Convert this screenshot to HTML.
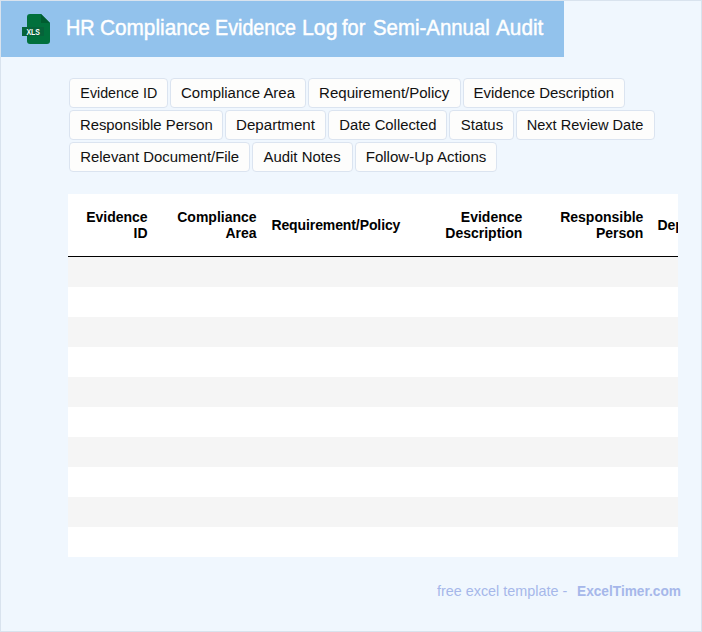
<!DOCTYPE html>
<html lang="en"><head><meta charset="utf-8"><title>HR Compliance Evidence Log for Semi-Annual Audit</title>
<style>
html,body{margin:0;padding:0;}
body{width:702px;height:632px;overflow:hidden;background:#f0f7fe;font-family:"Liberation Sans",Arial,sans-serif;position:relative;}
.frame{position:absolute;left:0;top:0;width:700px;height:630px;border:1px solid #d9e3ee;pointer-events:none;}
.hdr{position:absolute;left:1px;top:1px;width:563px;height:56px;background:#92c2ec;}
.hdr h1 span{position:absolute;top:0;left:0;display:block;transform-origin:0 50%;}
.hdr h1{position:absolute;margin:0;left:0;top:14.6px;font-size:21.8px;line-height:24px;font-weight:400;color:#fff;-webkit-text-stroke:0.45px #fff;white-space:nowrap;transform-origin:0 50%;transform:scaleX(1);}
.ico{position:absolute;left:21px;top:13px;width:30px;height:32px;}
.tag{position:absolute;box-sizing:border-box;height:30px;border:1px solid #dbe4f0;border-radius:4px;background:#fdfdfc;color:#111;font-size:15.5px;line-height:28px;text-align:center;white-space:nowrap;}
.tag span{display:inline-block;transform-origin:50% 50%;}
.tbl{position:absolute;left:68px;top:194px;width:610px;height:363px;background:#fff;overflow:hidden;}
.th{position:absolute;font-weight:700;font-size:14px;line-height:16px;color:#000;text-align:right;white-space:nowrap;}
.rule{position:absolute;left:0;top:62px;width:610px;height:1px;background:#000;}
.row{position:absolute;left:0;width:610px;height:30px;background:#f5f5f5;}
.foot{position:absolute;top:582px;transform-origin:0 50%;font-size:14.5px;line-height:18px;color:#a6b7ea;white-space:nowrap;}
</style></head><body>
<div class="hdr">
<svg class="ico" viewBox="0 0 30 32">
<path d="M8 0 H19 L28 9 V27 a3 3 0 0 1 -3 3 H8 a3 3 0 0 1 -3 -3 V3 a3 3 0 0 1 3 -3 Z" fill="#01703c"/>
<path d="M19 0 L28 9 H19 Z" fill="#005c30"/>
<rect x="0" y="13" width="22" height="9" fill="#06633a"/>
<text transform="translate(11.2 20.8) scale(0.8 1)" x="0" y="0" text-anchor="middle" font-family="Liberation Sans, Arial, sans-serif" font-weight="700" font-size="8.7" fill="#ffffff">XLS</text>
</svg>
<h1><span style="left:64.7px;transform:scaleX(0.9088)">HR</span> <span style="left:98.6px;transform:scaleX(0.9531)">Compliance</span> <span style="left:214.1px;transform:scaleX(0.9041)">Evidence</span> <span style="left:300.9px;transform:scaleX(0.9751)">Log</span> <span style="left:341.4px;transform:scaleX(0.9151)">for</span> <span style="left:371.7px;transform:scaleX(0.9361)">Semi-Annual</span> <span style="left:494.85px;transform:scaleX(0.952)">Audit</span></h1>
</div>

<div class="tag" id="tag0" style="left:69px;top:78px;width:99px"><span style="transform:translateY(-0.4px) scaleX(0.9193)">Evidence ID</span></div>
<div class="tag" id="tag1" style="left:170px;top:78px;width:136px"><span style="transform:translateY(-0.4px) scaleX(0.9654)">Compliance Area</span></div>
<div class="tag" id="tag2" style="left:308px;top:78px;width:153px"><span style="transform:translateY(-0.4px) scaleX(0.9685)">Requirement/Policy</span></div>
<div class="tag" id="tag3" style="left:463px;top:78px;width:162px"><span style="transform:translateY(-0.4px) scaleX(0.9649)">Evidence Description</span></div>
<div class="tag" id="tag4" style="left:69px;top:110px;width:154px"><span style="transform:translateY(-0.4px) scaleX(0.9576)">Responsible Person</span></div>
<div class="tag" id="tag5" style="left:225px;top:110px;width:101px"><span style="transform:translateY(-0.4px) scaleX(0.9741)">Department</span></div>
<div class="tag" id="tag6" style="left:328px;top:110px;width:119px"><span style="transform:translateY(-0.4px) scaleX(0.9563)">Date Collected</span></div>
<div class="tag" id="tag7" style="left:449px;top:110px;width:65px"><span style="transform:translateY(-0.4px) scaleX(0.9634)">Status</span></div>
<div class="tag" id="tag8" style="left:516px;top:110px;width:139px"><span style="transform:translateY(-0.4px) scaleX(0.9406)">Next Review Date</span></div>
<div class="tag" id="tag9" style="left:69px;top:142px;width:181px"><span style="transform:translateY(-0.4px) scaleX(0.9607)">Relevant Document/File</span></div>
<div class="tag" id="tag10" style="left:252px;top:142px;width:101px"><span style="transform:translateY(-0.4px) scaleX(0.9613)">Audit Notes</span></div>
<div class="tag" id="tag11" style="left:355px;top:142px;width:142px"><span style="transform:translateY(-0.4px) scaleX(0.9732)">Follow-Up Actions</span></div>
<div class="tbl">
<div class="row" style="top:63px"></div>
<div class="row" style="top:123px"></div>
<div class="row" style="top:183px"></div>
<div class="row" style="top:243px"></div>
<div class="row" style="top:303px"></div>
<div class="rule"></div>
<div class="th" style="right:530.4px;top:15px">Evidence<br>ID</div>
<div class="th" style="right:421.4px;top:15px">Compliance<br>Area</div>
<div class="th" style="left:203.4px;top:23px;text-align:left;letter-spacing:-0.1px">Requirement/Policy</div>
<div class="th" style="right:155.7px;top:15px">Evidence<br>Description</div>
<div class="th" style="right:34.6px;top:15px">Responsible<br>Person</div>
<div class="th" style="left:589.6px;top:23px;text-align:left;letter-spacing:-0.1px">Department</div>
</div>
<div class="foot" id="f1" style="left:437px;transform:scaleX(0.991)">free excel template -</div>
<div class="foot" id="f2" style="left:577px;font-weight:700;transform:scaleX(0.9442)">ExcelTimer.com</div>
<div class="frame"></div>
</body></html>
